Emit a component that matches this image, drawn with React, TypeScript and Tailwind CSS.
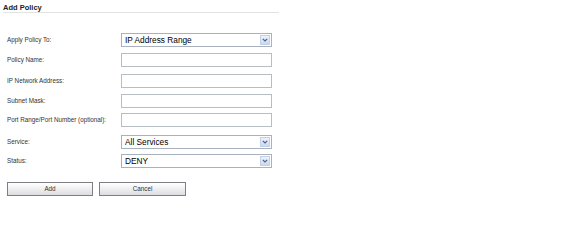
const rows = [
  { label: "Apply Policy To:", kind: "select", value: "IP Address Range", mt: "mt-[20px]" },
  { label: "Policy Name:", kind: "input", mt: "mt-[6px]" },
  { label: "IP Network Address:", kind: "input", mt: "mt-[7px]" },
  { label: "Subnet Mask:", kind: "input", mt: "mt-[6px]" },
  { label: "Port Range/Port Number (optional):", kind: "input", mt: "mt-[5px]" },
  { label: "Service:", kind: "select", value: "All Services", mt: "mt-[8px]" },
  { label: "Status:", kind: "select", value: "DENY", mt: "mt-[5px]" },
];

const FakeSelect = ({ value }: { value: string }) => (
  <div className="flex h-[14px] w-[151px] items-stretch border border-[#a9b1bd] bg-white">
    <span className="flex-1 pl-[3px] text-[8.3px] leading-[12px] text-black [font-family:'Liberation_Sans',Arial,sans-serif]">
      {value}
    </span>
    <span className="m-[1px] flex w-[10px] items-center justify-center border border-[#c3d0e6] bg-gradient-to-b from-[#eef3fc] to-[#c9d8f1]">
      <svg width="6" height="4" viewBox="0 0 6 4">
        <path d="M0.8 0.8 L3 3 L5.2 0.8" fill="none" stroke="#4d6185" strokeWidth="1.2" />
      </svg>
    </span>
  </div>
);

export default function App() {
  return (
    <div className="h-[214px] w-[576px] bg-white [font-family:'Liberation_Sans',Arial,sans-serif]">
      <div className="ml-[3px] w-[276px] pt-[3px]">
        <div className="h-[10px] border-b border-[#e3e3e3] text-[7.5px] font-bold leading-[9px] text-[#222]">
          Add Policy
        </div>
        <div className="pl-[4px]">
          {rows.map((row) => (
            <div key={row.label} className={`flex h-[14px] items-center ${row.mt}`}>
              <label className="w-[114px] text-[6.3px] text-[#333]">{row.label}</label>
              {row.kind === "select" ? (
                <FakeSelect value={row.value || ""} />
              ) : (
                <input className="h-[14px] w-[151px] border border-[#b7bcc5] bg-white outline-none" />
              )}
            </div>
          ))}
          <div className="mt-[14px] flex gap-[6px]">
            <button className="h-[14px] w-[86px] border border-[#7d7d84] bg-gradient-to-b from-white to-[#dedee2] text-[6.3px] text-[#333]">
              Add
            </button>
            <button className="h-[14px] w-[87px] border border-[#7d7d84] bg-gradient-to-b from-white to-[#dedee2] text-[6.3px] text-[#333]">
              Cancel
            </button>
          </div>
        </div>
      </div>
    </div>
  );
}
